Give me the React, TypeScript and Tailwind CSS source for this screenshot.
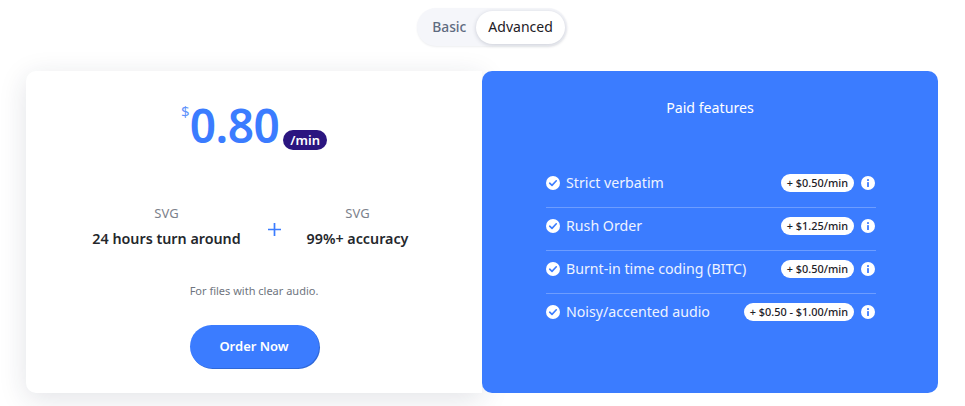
import React from "react";

const features = [
  { label: "Strict verbatim", price: "+ $0.50/min" },
  { label: "Rush Order", price: "+ $1.25/min" },
  { label: "Burnt-in time coding (BITC)", price: "+ $0.50/min" },
  { label: "Noisy/accented audio", price: "+ $0.50 - $1.00/min" },
];

const CheckBadge = () => (
  <svg className="w-[14px] h-[14px] shrink-0" viewBox="0 0 14 14" aria-hidden="true">
    <circle cx="7" cy="7" r="7" fill="#fff" />
    <path d="M3.7 7.2 6 9.4l4.3-4.6" fill="none" stroke="#3b7cff" strokeWidth="1.6" strokeLinecap="round" strokeLinejoin="round" />
  </svg>
);

const InfoBadge = () => (
  <svg className="w-[14px] h-[14px] shrink-0" viewBox="0 0 14 14" aria-hidden="true">
    <circle cx="7" cy="7" r="7" fill="#fff" />
    <rect x="6" y="3" width="2" height="2" rx="0.6" fill="#4f88ff" />
    <rect x="6" y="6" width="2" height="5" rx="0.6" fill="#4f88ff" />
  </svg>
);

const Stat = ({ text, className }: { text: string; className: string }) => (
  <div className={`flex flex-col items-center ${className}`}>
    <span className="text-[13px] leading-[18px] text-[#7c828c]">SVG</span>
    <span className="mt-[7px] text-[14.3px] leading-5 font-semibold text-[#24272c] whitespace-nowrap">{text}</span>
  </div>
);

export default function App() {
  return (
    <div className="w-[965px] h-[406px] overflow-hidden bg-white font-['Noto_Sans','Open_Sans',sans-serif]">
      <div className="flex justify-center pt-2 pl-[19px]">
        <div className="flex items-center h-[38px] rounded-full bg-[#f5f6fa] pl-[15px] pr-[2px] shadow-[0_1px_2px_rgba(30,40,70,0.08)]">
          <span className="text-[13.8px] font-medium text-[#5f6b80] mr-[10px]">Basic</span>
          <span className="flex items-center h-[33px] px-3 rounded-full bg-white text-sm text-[#1d2026] shadow-[0_1px_4px_rgba(30,40,70,0.2)]">
            Advanced
          </span>
        </div>
      </div>

      <div className="flex mt-[25px] ml-[26px] w-[912px] h-[322px]">
        <section className="w-[456px] flex flex-col items-center bg-white rounded-l-[10px] shadow-[0_6px_28px_rgba(30,40,70,0.13)]">
          <div className="flex items-start h-[82px] mt-[22px]">
            <span className="mt-[8px] text-[15px] leading-5 text-[#5f93fb]">$</span>
            <span className="text-[46px] leading-[64px] font-semibold tracking-[-0.5px] text-[#3b7cff]">0.80</span>
            <span className="mt-[37px] ml-[4px] h-[20px] px-[7px] rounded-full bg-[#2b1680] text-white text-[13px] leading-[20px] font-semibold">
              /min
            </span>
          </div>

          <div className="flex items-start mt-[29px]">
            <Stat text="24 hours turn around" className="w-[150px]" />
            <span className="w-[57px] mt-[19px] pl-[9px] flex justify-center text-[#3b7cff]">
              <svg className="w-[13px] h-[13px]" viewBox="0 0 13 13" aria-hidden="true">
                <path d="M6.5 0v13M0 6.5h13" stroke="currentColor" strokeWidth="1.7" />
              </svg>
            </span>
            <Stat text="99%+ accuracy" className="w-[118px]" />
          </div>

          <p className="mt-[34px] text-[11px] leading-4 text-[#6f7580]">For files with clear audio.</p>

          <button className="mt-[26px] w-[129px] h-[43px] rounded-full bg-[#3b7cff] text-white text-[13px] font-semibold shadow-[1px_1px_0_#2f68d8]">
            Order Now
          </button>
        </section>

        <section className="w-[456px] bg-[#3b7cff] rounded-[10px] flex flex-col items-center">
          <h2 className="mt-[27px] text-[14.2px] leading-5 font-normal text-white">Paid features</h2>
          <ul className="mt-[47px] ml-[2px] w-[330px] text-white">
            {features.map((f, i) => (
              <li key={f.label} className={`flex items-center h-[43px] pb-[7px] pr-[1px] ${i < 3 ? "border-b border-[#6d9dff]" : ""}`}>
                <CheckBadge />
                <span className="ml-[6px] text-[14.2px] text-[#eef3ff]">{f.label}</span>
                <span className="ml-auto h-[18px] px-[6px] rounded-full bg-white text-[#1d2026] text-[10.9px] leading-[18px] font-medium whitespace-nowrap">
                  {f.price}
                </span>
                <span className="ml-[7px]"><InfoBadge /></span>
              </li>
            ))}
          </ul>
        </section>
      </div>
    </div>
  );
}
